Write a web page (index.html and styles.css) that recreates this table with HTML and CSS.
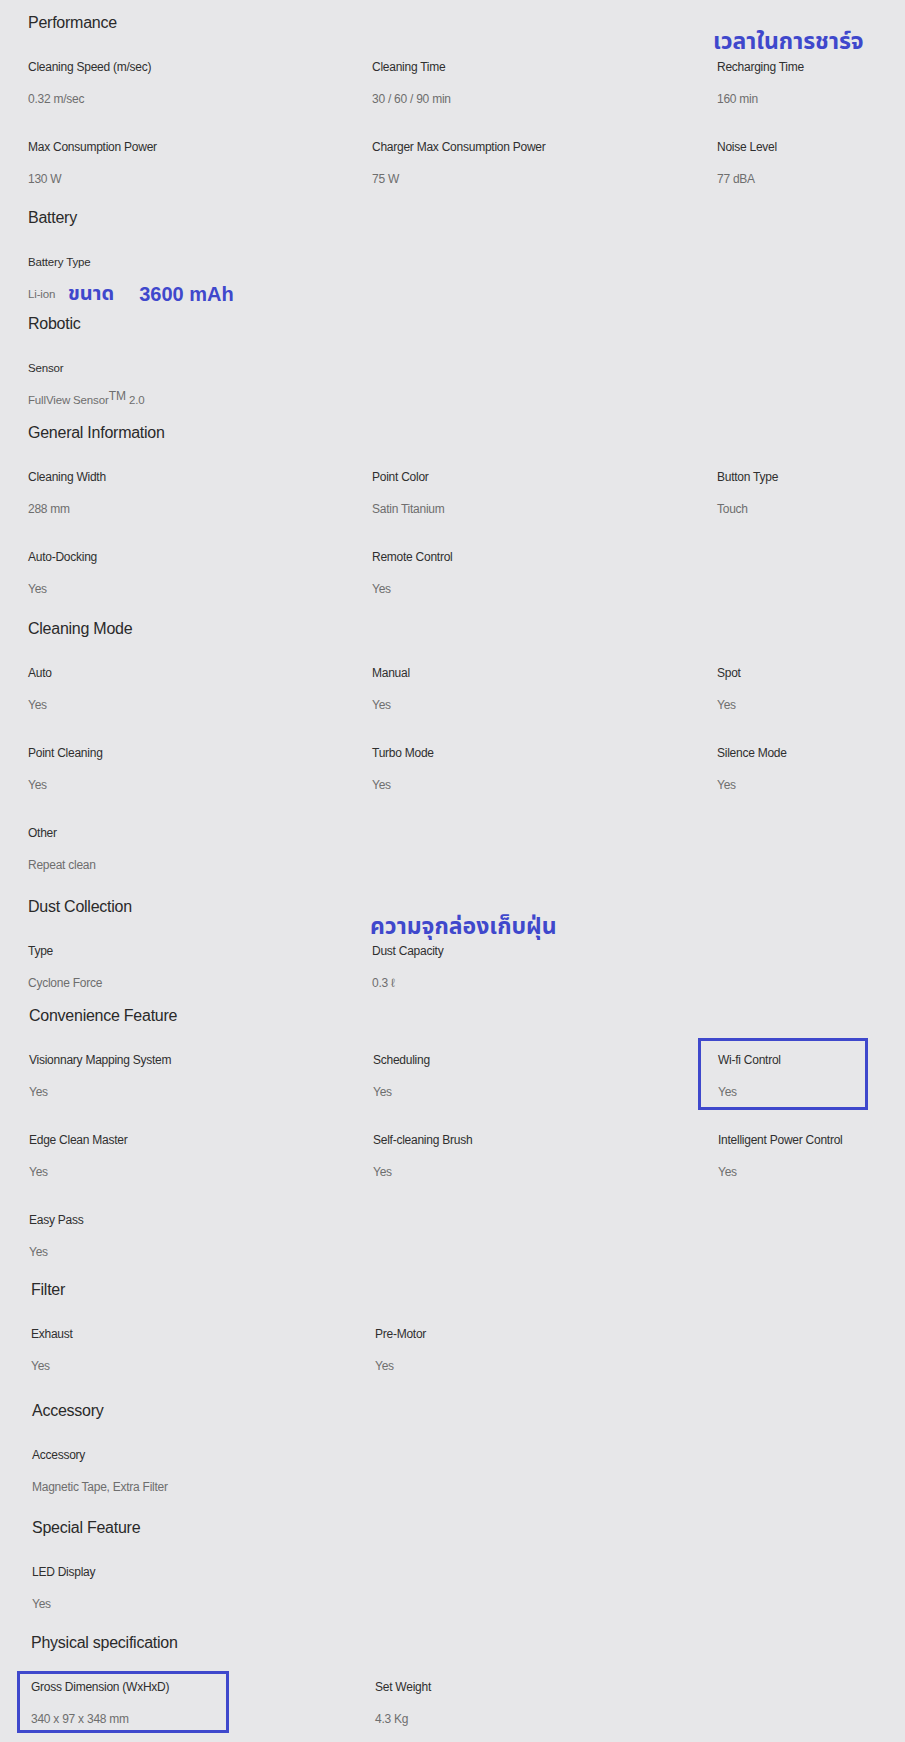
FILE: index.html
```html
<!DOCTYPE html>
<html lang="en">
<head>
<meta charset="utf-8">
<title>Specifications</title>
<link rel="stylesheet" href="styles.css">
</head>
<body>
<main class="specs">

  <section class="sec sec--first">
    <h2 class="sec-title">Performance</h2>
    <div class="grid">
      <div class="item"><div class="lbl">Cleaning Speed (m/sec)</div><div class="val">0.32 m/sec</div></div>
      <div class="item"><div class="lbl">Cleaning Time</div><div class="val">30 / 60 / 90 min</div></div>
      <div class="item"><span class="note note--charge">เวลาในการชาร์จ</span><div class="lbl">Recharging Time</div><div class="val">160 min</div></div>
      <div class="item"><div class="lbl">Max Consumption Power</div><div class="val">130 W</div></div>
      <div class="item"><div class="lbl">Charger Max Consumption Power</div><div class="val">75 W</div></div>
      <div class="item"><div class="lbl">Noise Level</div><div class="val">77 dBA</div></div>
    </div>
  </section>

  <section class="sec sec--small sec--g17">
    <h2 class="sec-title">Battery</h2>
    <div class="grid">
      <div class="item"><div class="lbl">Battery Type</div><div class="val">Li-ion<span class="note note--size"><span class="note-th">ขนาด</span><span class="note-num">3600 mAh</span></span></div></div>
    </div>
  </section>

  <section class="sec sec--small sec--g8">
    <h2 class="sec-title">Robotic</h2>
    <div class="grid">
      <div class="item"><div class="lbl">Sensor</div><div class="val">FullView Sensor<sup class="tm">TM</sup> 2.0</div></div>
    </div>
  </section>

  <section class="sec sec--g11">
    <h2 class="sec-title">General Information</h2>
    <div class="grid">
      <div class="item"><div class="lbl">Cleaning Width</div><div class="val">288 mm</div></div>
      <div class="item"><div class="lbl">Point Color</div><div class="val">Satin Titanium</div></div>
      <div class="item"><div class="lbl">Button Type</div><div class="val">Touch</div></div>
      <div class="item"><div class="lbl">Auto-Docking</div><div class="val">Yes</div></div>
      <div class="item"><div class="lbl">Remote Control</div><div class="val">Yes</div></div>
    </div>
  </section>

  <section class="sec sec--g18">
    <h2 class="sec-title">Cleaning Mode</h2>
    <div class="grid">
      <div class="item"><div class="lbl">Auto</div><div class="val">Yes</div></div>
      <div class="item"><div class="lbl">Manual</div><div class="val">Yes</div></div>
      <div class="item"><div class="lbl">Spot</div><div class="val">Yes</div></div>
      <div class="item"><div class="lbl">Point Cleaning</div><div class="val">Yes</div></div>
      <div class="item"><div class="lbl">Turbo Mode</div><div class="val">Yes</div></div>
      <div class="item"><div class="lbl">Silence Mode</div><div class="val">Yes</div></div>
      <div class="item"><div class="lbl">Other</div><div class="val">Repeat clean</div></div>
    </div>
  </section>

  <section class="sec sec--g20">
    <h2 class="sec-title">Dust Collection</h2>
    <div class="grid">
      <div class="item"><div class="lbl">Type</div><div class="val">Cyclone Force</div></div>
      <div class="item"><span class="note note--dust">ความจุกล่องเก็บฝุ่น</span><div class="lbl">Dust Capacity</div><div class="val">0.3 ℓ</div></div>
    </div>
  </section>

  <section class="sec sec--g11 sec--in1">
    <h2 class="sec-title">Convenience Feature</h2>
    <div class="grid">
      <div class="item"><div class="lbl">Visionnary Mapping System</div><div class="val">Yes</div></div>
      <div class="item"><div class="lbl">Scheduling</div><div class="val">Yes</div></div>
      <div class="item"><span class="mark mark--wifi"></span><div class="lbl">Wi-fi Control</div><div class="val">Yes</div></div>
      <div class="item"><div class="lbl">Edge Clean Master</div><div class="val">Yes</div></div>
      <div class="item"><div class="lbl">Self-cleaning Brush</div><div class="val">Yes</div></div>
      <div class="item"><div class="lbl">Intelligent Power Control</div><div class="val">Yes</div></div>
      <div class="item"><div class="lbl">Easy Pass</div><div class="val">Yes</div></div>
    </div>
  </section>

  <section class="sec sec--in3">
    <h2 class="sec-title">Filter</h2>
    <div class="grid">
      <div class="item"><div class="lbl">Exhaust</div><div class="val">Yes</div></div>
      <div class="item"><div class="lbl">Pre-Motor</div><div class="val">Yes</div></div>
    </div>
  </section>

  <section class="sec sec--g23 sec--in4">
    <h2 class="sec-title">Accessory</h2>
    <div class="grid">
      <div class="item"><div class="lbl">Accessory</div><div class="val">Magnetic Tape, Extra Filter</div></div>
    </div>
  </section>

  <section class="sec sec--g19 sec--in4">
    <h2 class="sec-title">Special Feature</h2>
    <div class="grid">
      <div class="item"><div class="lbl">LED Display</div><div class="val">Yes</div></div>
    </div>
  </section>

  <section class="sec sec--g17 sec--in3">
    <h2 class="sec-title">Physical specification</h2>
    <div class="grid">
      <div class="item"><span class="mark mark--dim"></span><div class="lbl">Gross Dimension (WxHxD)</div><div class="val">340 x 97 x 348 mm</div></div>
      <div class="item"><div class="lbl">Set Weight</div><div class="val">4.3 Kg</div></div>
    </div>
  </section>

</main>
</body>
</html>
```
FILE: styles.css
```css
html, body {
  margin: 0;
  padding: 0;
  background: #e7e7e9;
}

body {
  font-family: "Liberation Sans", Arial, sans-serif;
  color: #333;
  width: 905px;
  min-height: 1742px;
}

.specs {
  padding-bottom: 12px;
}

.sec {
  margin-top: 16px;
  padding-left: 28px;
}
.sec--first { margin-top: 0; padding-top: 11px; }
.sec--g8 { margin-top: 8px; }
.sec--g11 { margin-top: 11px; }
.sec--g17 { margin-top: 17px; }
.sec--g18 { margin-top: 18px; }
.sec--g19 { margin-top: 19px; }
.sec--g20 { margin-top: 20px; }
.sec--g23 { margin-top: 23px; }
.sec--in1 { padding-left: 29px; }
.sec--in3 { padding-left: 31px; }
.sec--in4 { padding-left: 32px; }

.sec-title {
  margin: 0;
  font-size: 16px;
  font-weight: normal;
  line-height: 24px;
  height: 24px;
  letter-spacing: -0.25px;
  color: #2a2a2a;
}

.grid {
  display: grid;
  grid-template-columns: 344px 345px 1fr;
  row-gap: 28px;
  margin-top: 22px;
}

.item {
  position: relative;
}

.lbl {
  font-size: 12px;
  line-height: 20px;
  height: 20px;
  letter-spacing: -0.25px;
  color: #2f2f2f;
  white-space: nowrap;
}

.val {
  position: relative;
  margin-top: 12px;
  font-size: 12px;
  line-height: 20px;
  height: 20px;
  letter-spacing: -0.25px;
  color: #6e6e6e;
  white-space: nowrap;
}

.sec--small .lbl,
.sec--small .val {
  font-size: 11.5px;
  letter-spacing: -0.15px;
}

.tm {
  font-size: 12px;
  line-height: 0;
  vertical-align: 4px;
  letter-spacing: 0;
}

/* hand-drawn annotations laid over the page */
.note {
  position: absolute;
  display: flex;
  align-items: center;
  white-space: nowrap;
  font-family: "Noto Sans Thai", Tahoma, "Leelawadee UI", "DejaVu Sans", "Noto Sans", sans-serif;
  font-weight: bold;
  color: #3f48cc;
  letter-spacing: 0;
}
.note--charge {
  left: -4px;
  top: -30px;
  font-size: 23px;
  line-height: 30px;
}
.note--size {
  left: 40px;
  top: -3px;
  height: 26px;
  line-height: 26px;
  gap: 25px;
}
.note-th {
  font-size: 20px;
}
.note-num {
  font-family: "Liberation Sans", Arial, sans-serif;
  font-size: 20px;
}
.note--dust {
  left: -2px;
  top: -29px;
  font-size: 23px;
  line-height: 30px;
}

.mark {
  position: absolute;
  box-sizing: border-box;
  border: 3px solid #3f48cc;
}
.mark--wifi {
  left: -20px;
  top: -12px;
  width: 170px;
  height: 72px;
}
.mark--dim {
  left: -14px;
  top: -6px;
  width: 212px;
  height: 62px;
}
```
